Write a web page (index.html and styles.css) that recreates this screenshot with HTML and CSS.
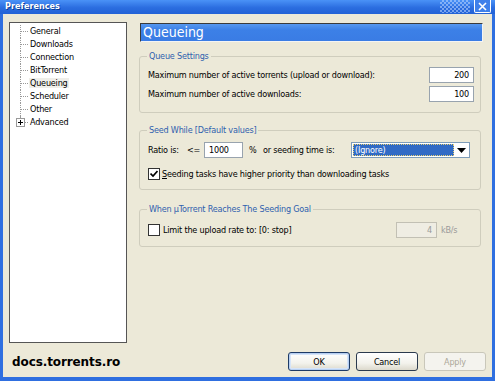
FILE: index.html
```html
<!DOCTYPE html>
<html>
<head>
  <title>Preferences</title>
  <link rel="stylesheet" href="styles.css">
</head>
<body>
  <div class="window">
    <div class="titlebar">
      <span class="title">Preferences</span>
      <span class="dots"></span>
      <span class="close">
        <svg width="9" height="9" viewBox="0 0 9 9"><path d="M1 1 L8 8 M8 1 L1 8" stroke="#fff" stroke-width="1.6"/></svg>
      </span>
    </div>

    <div class="client">
      <div class="main">
        <ul class="tree">
          <li>General</li>
          <li>Downloads</li>
          <li>Connection</li>
          <li>BitTorrent</li>
          <li><span class="sel">Queueing</span></li>
          <li>Scheduler</li>
          <li>Other</li>
          <li class="last"><span class="plus"></span>Advanced</li>
        </ul>

        <div class="pane">
          <div class="pane-head">Queueing</div>

          <!-- queue limits -->
          <fieldset class="group g-queue">
            <legend>Queue Settings</legend>
            <div class="row">
              <span class="grow">Maximum number of active torrents (upload or download):</span>
              <span class="field num w45">200</span>
            </div>
            <div class="row">
              <span class="grow">Maximum number of active downloads:</span>
              <span class="field num w45">100</span>
            </div>
          </fieldset>

          <!-- seeding -->
          <fieldset class="group g-seed">
            <legend>Seed While [Default values]</legend>
            <div class="row">
              <span class="ratio-label">Ratio is:</span>
              <span class="le">&lt;=</span>
              <span class="field w39">1000</span>
              <span class="pct">%</span>
              <span class="time-label">or seeding time is:</span>
              <span class="combo">
                <span class="combo-sel"><span class="combo-text">(Ignore)</span></span>
                <span class="combo-btn">
                  <svg width="9" height="5" viewBox="0 0 9 5"><path d="M0 0 H9 L4.5 5 Z" fill="#000"/></svg>
                </span>
              </span>
            </div>
            <div class="row row-check">
              <span class="check">
                <svg width="8" height="8" viewBox="0 0 8 8"><path d="M0.5 3.5 L3 6 L7.5 1" fill="none" stroke="#000" stroke-width="1.7"/></svg>
              </span>
              <span><u>S</u>eeding tasks have higher priority than downloading tasks</span>
            </div>
          </fieldset>

          <!-- goal -->
          <fieldset class="group g-goal">
            <legend>When &micro;Torrent Reaches The Seeding Goal</legend>
            <div class="row">
              <span class="check"></span>
              <span class="grow">Limit the upload rate to: [0: stop]</span>
              <span class="field num off w41">4</span>
              <span class="unit">kB/s</span>
            </div>
          </fieldset>
        </div>
      </div>

      <div class="footer">
        <span class="brand">docs.torrents.ro</span>
        <div class="buttons">
          <span class="btn default">OK</span>
          <span class="btn">Cancel</span>
          <span class="btn disabled"><u>A</u>pply</span>
        </div>
      </div>
    </div>
  </div>
</body>
</html>
```

FILE: styles.css
```css
body {
  margin: 0;
  font-family: "DejaVu Sans Condensed", "Liberation Sans", sans-serif;
  font-size: 9px;
  letter-spacing: -0.2px;
  color: #000;
}

.window {
  width: 495px;
  height: 381px;
  display: flex;
  flex-direction: column;
  background: #2f6fe0;
}

/* title bar */
.titlebar {
  height: 14px;
  display: flex;
  align-items: flex-start;
  padding: 0 4px 0 5px;
  background: linear-gradient(#4a92f7, #2b6de0 55%, #2262d6);
}
.title {
  color: #fff;
  font-weight: bold;
  letter-spacing: 0;
  line-height: 13px;
  text-shadow: 1px 1px 0 #0c3d96;
}
.dots {
  margin-left: auto;
  width: 30px;
  height: 13px;
  background: repeating-conic-gradient(rgba(190, 215, 255, 0.55) 0 25%, transparent 0 50%) 0 0 / 4px 4px;
}
.close {
  margin-left: 4px;
  width: 17px;
  height: 13px;
  box-sizing: border-box;
  border: 1px solid #fff;
  border-top: 0;
  border-radius: 0 0 2px 2px;
  background: #3f80ea;
  display: flex;
  align-items: center;
  justify-content: center;
}

/* dialog body */
.client {
  flex: 1;
  margin: 0 3px 4px;
  padding: 8px 6px 6px 6px;
  background: #ece9d8;
  display: flex;
  flex-direction: column;
}
.main {
  flex: 1;
  display: flex;
  padding-right: 3px;
}

/* tree */
.tree {
  width: 118px;
  box-sizing: border-box;
  margin: 0;
  padding: 2px 0 0;
  list-style: none;
  background: #fff;
  border: 1px solid #555;
}
.tree li {
  position: relative;
  height: 13px;
  line-height: 13px;
  padding-left: 20px;
  white-space: nowrap;
}
.tree li::before {
  content: "";
  position: absolute;
  left: 11px;
  top: 6px;
  width: 7px;
  border-top: 1px dotted #999;
}
.tree li::after {
  content: "";
  position: absolute;
  left: 10px;
  top: 0;
  height: 13px;
  border-left: 1px dotted #999;
}
.tree li.last::after {
  height: 2px;
}
.tree li.last::before {
  left: 15px;
  width: 3px;
}
.tree .plus {
  position: absolute;
  left: 6px;
  top: 2px;
  width: 9px;
  height: 9px;
  box-sizing: border-box;
  border: 1px solid #999;
  background:
    linear-gradient(#000, #000) center / 5px 1px no-repeat,
    linear-gradient(#000, #000) center / 1px 5px no-repeat,
    #fff;
}
.tree .sel {
  background: #efeee9;
  padding: 0 1px;
  margin-left: -1px;
}

/* right pane */
.pane {
  flex: 1;
  margin-left: 12px;
  display: flex;
  flex-direction: column;
}
.pane-head {
  margin: 1px 0 0 1px;
  height: 19px;
  box-sizing: border-box;
  border: 1px solid;
  border-color: #3a3a3a #f4f4f4 #f4f4f4 #3a3a3a;
  background: linear-gradient(#5798ef, #3c80e7 35%, #3a7ce4);
  color: #fff;
  font-size: 14px;
  letter-spacing: 0;
  line-height: 16px;
  padding-left: 2px;
}

.group {
  margin: 0 2px 0 0;
  padding: 5px 6px 10px 8px;
  border: 1px solid #cfcdbd;
  border-radius: 3px;
}
.group legend {
  padding: 0 2px;
  margin-left: -1px;
  line-height: 12px;
  color: #2f5fae;
}
.g-queue { margin-top: 8px; }
.g-seed { margin-top: 11px; padding-top: 6px; padding-bottom: 7px; }
.g-goal { margin-top: 13px; padding-top: 7px; padding-bottom: 8px; }

.row {
  display: flex;
  align-items: center;
  height: 16px;
}
.row + .row { margin-top: 3px; }
.g-seed .row + .row { margin-top: 8px; }
.grow { flex: 1; }

.field {
  box-sizing: border-box;
  height: 16px;
  line-height: 14px;
  padding: 0 4px;
  border: 1px solid #98a3ae;
  background: #fff;
}
.field.num { text-align: right; }
.field.off {
  border-color: #c2c0b4;
  background: #efede3;
  color: #9a9a9a;
}
.w45 { width: 45px; }
.w41 { width: 41px; }
.w39 { width: 39px; }

.ratio-label { width: 39px; }
.le { width: 17px; }
.pct { width: 8px; margin-left: 6px; }
.time-label { width: 88px; margin-left: 6px; }

.combo {
  width: 119px;
  height: 16px;
  box-sizing: border-box;
  border: 1px solid #7f9db9;
  background: #fff;
  display: flex;
}
.combo-sel {
  flex: 1;
  margin: 1px 0 1px 1px;
  background: #316ac5;
  color: #fff;
  outline: 1px dotted #e8d070;
  outline-offset: -1px;
  line-height: 12px;
  padding-left: 2px;
}
.combo-btn {
  width: 15px;
  display: flex;
  align-items: center;
  justify-content: center;
}

.check {
  width: 12px;
  height: 12px;
  box-sizing: border-box;
  border: 1px solid #333;
  background: #fff;
  margin-right: 3px;
  display: flex;
  align-items: center;
  justify-content: center;
}
.row-check .check { margin-right: 2px; }

.unit {
  width: 37px;
  padding-left: 4px;
  box-sizing: border-box;
  color: #9a9a9a;
}

/* footer */
.footer {
  height: 19px;
  margin-top: 9px;
  display: flex;
  align-items: center;
}
.brand {
  margin-left: 3px;
  font-family: "DejaVu Sans", sans-serif;
  font-weight: bold;
  font-size: 12px;
  letter-spacing: -0.1px;
}
.buttons {
  margin-left: auto;
  display: flex;
  gap: 6px;
}
.btn {
  width: 62px;
  height: 19px;
  box-sizing: border-box;
  border: 1px solid #2b3a4e;
  border-radius: 3px;
  background: linear-gradient(#fff, #f3f2ec 60%, #dcd9cc);
  display: flex;
  align-items: center;
  justify-content: center;
}
.btn.default {
  border-color: #1d3a66;
  box-shadow: inset 0 0 0 1px #b6cff2, inset 0 0 0 2px #d6e4f8;
}
.btn.disabled {
  border-color: #c9c7ba;
  background: #f4f3ee;
  color: #aca899;
}
.btn u { text-decoration: none; }
```
